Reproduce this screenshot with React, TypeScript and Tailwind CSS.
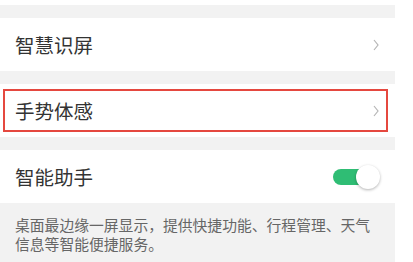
import React from 'react';

const FONT = { fontFamily: '"Noto Sans CJK SC", "Noto Sans", sans-serif' };

function Chevron() {
  return (
    <svg width="6" height="12" viewBox="0 0 6 12" className="mr-[16px]">
      <polyline points="1,1 5,6 1,11" fill="none" stroke="#b5b5b5" strokeWidth="1.2" />
    </svg>
  );
}

function Row({ label, children }: { label: string; children: React.ReactNode }) {
  return (
    <div className="flex h-[53px] items-center justify-between bg-white pl-[15px]">
      <span className="text-[19.5px] leading-none text-[#333]">{label}</span>
      {children}
    </div>
  );
}

export default function App() {
  return (
    <div className="h-[262px] w-[413px] overflow-hidden bg-white" style={FONT}>
      <div className="w-[395px] pt-[5px]">
        <div className="h-[13px] bg-[#f2f2f2]" />
        <Row label="智慧识屏">
          <Chevron />
        </Row>
        <div className="h-[13px] bg-[#f2f2f2]" />
        <div className="relative">
          <Row label="手势体感">
            <Chevron />
          </Row>
          {/* highlight box */}
          <div className="pointer-events-none absolute left-[3px] top-[5px] h-[43px] w-[385px] border-2 border-[#e5483f]" />
        </div>
        <div className="h-[13px] bg-[#f2f2f2]" />
        <Row label="智能助手">
          <div className="relative mr-[15px] h-[24px] w-[47px]">
            <div className="absolute left-0 top-[4px] h-[16px] w-[40px] rounded-full bg-[#2fbd74]" />
            <div className="absolute right-0 top-0 h-[24px] w-[24px] rounded-full bg-white shadow-[0_1px_3px_rgba(0,0,0,0.3)]" />
          </div>
        </Row>
        <div className="h-[59px] bg-[#f2f2f2] px-[15px] pt-[12px] text-[14.8px] leading-[19px] text-[#666]">
          桌面最边缘一屏显示，提供快捷功能、行程管理、天气信息等智能便捷服务。
        </div>
      </div>
    </div>
  );
}
